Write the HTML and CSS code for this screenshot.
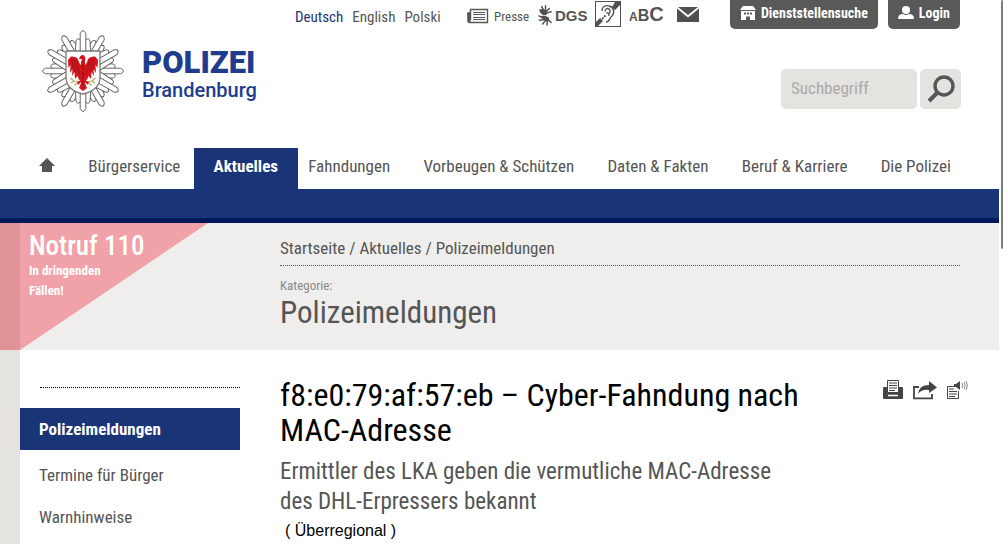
FILE: index.html
```
<!DOCTYPE html>
<html lang="de">
<head>
<meta charset="utf-8">
<title>Polizei Brandenburg</title>
<link rel="stylesheet" href="styles.css">
</head>
<body>
<div class="page">
  <header class="header">
    <div class="topbar">
      <nav class="languages" aria-label="Sprache">
        <a class="current" href="#">Deutsch</a>
        <a href="#">English</a>
        <a href="#">Polski</a>
      </nav>
      <nav class="services" aria-label="Service">
        <a class="presse" href="#">
          <svg width="22" height="16" viewBox="0 0 22 16"><path d="M3.500 1.500H20.500V14.500H2.500Q1 14.500 1 13V5H3.500ZM3.500 5V12" fill="none" stroke="#555" stroke-width="1.400"/><path d="M0 5H3.500V14H1Z" fill="#555"/><path d="M6 4.500H18M6 6.500H18M6 9.500H18M6 11.500H18" stroke="#555" stroke-width="1.200"/></svg>
          <span>Presse</span>
        </a>
        <a class="dgs" href="#">
          <svg width="15" height="24" viewBox="0 0 16 24"><g fill="none" stroke="#505050" stroke-width="1.600" stroke-linecap="round"><path d="M5 8L2 6.500M6 7L4 3M8 7L8 2M9 8L12 5M9 10L14 8.500"/><path d="M5 15L1 13M6 17L1.500 17.500M8 18L5 21.500M10 18L9.500 22.500M11 17L14 20"/></g><path d="M2 6Q7 5 10 8L9 12Q5 13 2 9ZM3 13Q8 12 12 15L11 19Q6 19 4 15Z" fill="#505050"/></svg>
          <b>DGS</b>
        </a>
        <a href="#" aria-label="Gehörlose">
          <svg width="26" height="26" viewBox="0 0 26 26"><rect x=".5" y=".5" width="25" height="25" fill="#fff" stroke="#505050"/><path d="M20 1H25V4L20 9L17 6ZM1 21L5 17L8 20L3 25H1Z" fill="#505050"/><path d="M7 10C7 5 11 4 14 5C19 6 20 12 17 15C14 17 15 21 11 21M10 10.500C10 7 13 7 14.500 8.500C16 10 15 12 13 13.500M11 12Q14 11 14 15" fill="none" stroke="#505050" stroke-width="1.300"/><path d="M7 18L11 14" stroke="#505050" stroke-width="2" stroke-dasharray="2 1"/></svg>
        </a>
        <a class="abc" href="#" aria-label="Schriftgröße"><b class="abc-a">A</b><b class="abc-b">B</b><b class="abc-c">C</b></a>
        <a class="mail" href="#" aria-label="Kontakt">
          <svg width="22" height="15" viewBox="0 0 22 15"><path d="M0 1.500L11 10.500L22 1.500V15H0Z" fill="#505050"/><path d="M1 0H21L11 8Z" fill="#505050"/></svg>
        </a>
      </nav>
      <div class="tabs">
        <a class="tab" href="#">
          <svg width="16" height="14" viewBox="0 0 16 14"><path d="M3 0H13L16 4H0Z" fill="#fff"/><path fill-rule="evenodd" d="M1 5H15V14H10V10.500H6V14H1ZM4 6.500V8.500H6V6.500ZM7 6.500V8.500H9V6.500ZM10 6.500V8.500H12V6.500Z" fill="#fff"/></svg>
          <span>Dienststellensuche</span>
        </a>
        <a class="tab" href="#">
          <svg width="16" height="14" viewBox="0 0 16 14"><circle cx="8" cy="4" r="4" fill="#fff"/><path d="M0 13Q0 8 5 8Q8 10 11 8Q16 8 16 13Z" fill="#fff"/></svg>
          <span>Login</span>
        </a>
      </div>
    </div>
    <div class="brandrow">
      <a class="brand" href="#">
        <svg class="star" width="84" height="84" viewBox="-42 -42 84 84">
          <defs>
            <g id="ray"><path d="M-8 -14L-7 -30Q-5.500 -34 -2.800 -31L2.800 -31Q5.500 -34 7 -30L8 -14" fill="#fff"/><path d="M-2.800 -16V-37.500Q0 -43.500 2.800 -37.500V-16Z" fill="#fff"/></g>
            <g id="wing"><path d="M1 -5Q4 -7 5 -12Q7 -15 12 -14.500L15 -11L14.500 -3L12.500 -6L13 2L10.500 -2L11 5L8.500 1L8 8L5.500 5L4 9L1 8Z" fill="#d3151c"/><path d="M6 -11L4 3M8.500 -12L7 1M11 -12L10 -1" stroke="#8f1015" stroke-width=".7" fill="none"/><path d="M2 9L6 11L5 14L2 11Z" fill="#d3151c"/><path d="M5 10.500L9 10L12.500 7M9 10L12 12M6 12L8.500 14.500" stroke="#b9a55a" stroke-width="1.200" fill="none"/></g>
          </defs>
          <g stroke="#555" stroke-width=".9">
            <use href="#ray" transform="rotate(30)"/><use href="#ray" transform="rotate(90)"/><use href="#ray" transform="rotate(150)"/><use href="#ray" transform="rotate(210)"/><use href="#ray" transform="rotate(270)"/><use href="#ray" transform="rotate(330)"/>
            <use href="#ray"/><use href="#ray" transform="rotate(60)"/><use href="#ray" transform="rotate(120)"/><use href="#ray" transform="rotate(180)"/><use href="#ray" transform="rotate(240)"/><use href="#ray" transform="rotate(300)"/>
          </g>
          <path d="M-17 -20H17V6Q17 19 0 23Q-17 19 -17 6Z" fill="#fff" stroke="#777" stroke-width="1.300"/>
          <use href="#wing"/><use href="#wing" transform="scale(-1 1)"/>
          <path d="M-4 -12Q-3 -16 0 -16Q3 -15 2 -10L3 8L2 12L4 17L0 20L-4 17L-2 12L-3 8L-2 -9L-1 -12Z" fill="#d3151c"/>
          <path d="M0 -7V17M-2 -4L2 -2M-2 2L2 4" stroke="#8f1015" stroke-width=".7" fill="none"/>
        </svg>
        <span class="brand-name"><b>POLIZEI</b><span>Brandenburg</span></span>
      </a>
      <form class="search">
        <input type="search" placeholder="Suchbegriff" aria-label="Suchbegriff">
        <button type="button" aria-label="Suchen">
          <svg width="28" height="28" viewBox="0 0 28 28"><circle cx="17" cy="11" r="9" fill="none" stroke="#555" stroke-width="3.400"/><path d="M10.500 17.500L2 26" stroke="#555" stroke-width="4"/></svg>
        </button>
      </form>
    </div>
    <nav class="mainnav" aria-label="Hauptnavigation">
      <a class="home" href="#" aria-label="Startseite"><svg width="16" height="14" viewBox="0 0 16 14"><path d="M8 0L16 8H13V14H3V8H0Z" fill="#555"/></svg></a>
      <a href="#">Bürgerservice</a>
      <a class="active" href="#">Aktuelles</a>
      <a href="#">Fahndungen</a>
      <a href="#">Vorbeugen &amp; Schützen</a>
      <a href="#">Daten &amp; Fakten</a>
      <a href="#">Beruf &amp; Karriere</a>
      <a href="#">Die Polizei</a>
    </nav>
  </header>
  <div class="bluebar"></div>
  <section class="hero">
    <div class="hero-edge"></div>
    <a class="emergency" href="#"><strong>Notruf 110</strong><span>In dringenden<br>Fällen!</span></a>
    <div class="hero-text">
      <nav class="crumbs" aria-label="Brotkrumen"><a href="#">Startseite</a> / <a href="#">Aktuelles</a> / <a href="#">Polizeimeldungen</a></nav>
      <p class="label">Kategorie:</p>
      <p class="category">Polizeimeldungen</p>
    </div>
  </section>
  <div class="body">
    <aside class="sidebar">
      <nav aria-label="Unternavigation">
        <a class="selected" href="#">Polizeimeldungen</a>
        <a href="#">Termine für Bürger</a>
        <a href="#">Warnhinweise</a>
      </nav>
    </aside>
    <main class="article">
      <div class="article-text">
        <h1>f8:e0:79:af:57:eb – Cyber-Fahndung nach MAC-Adresse</h1>
        <h2>Ermittler des LKA geben die vermutliche MAC-Adresse des DHL-Erpressers bekannt</h2>
        <p>( Überregional )</p>
      </div>
      <div class="tools">
        <button type="button" aria-label="Drucken"><svg width="20" height="20" viewBox="0 0 20 20"><path d="M0 8Q0 7 1 7H19Q20 7 20 8V18Q20 19 19 19H1Q0 19 0 18Z" fill="#444"/><path d="M4.500 .500H15.500V12.500H4.500Z" fill="#fff" stroke="#444"/><path d="M6 3H14M6 5.500H14M6 8H14M6 10.500H12" stroke="#444"/><path d="M5 15.500H15" stroke="#fff" stroke-width="1.500"/></svg></button>
        <button type="button" aria-label="Teilen"><svg width="24" height="20" viewBox="0 0 24 20"><path d="M6 7H1V18.300H19V14" fill="none" stroke="#444" stroke-width="1.800"/><path d="M16 1L24 7.500L16 13V10Q9 9 5 14Q6 5 16 5Z" fill="#444"/></svg></button>
        <button type="button" aria-label="Vorlesen"><svg width="21" height="20" viewBox="0 0 21 20"><path d="M7 6.500H.500V18.500H11.500V11" fill="none" stroke="#444"/><path d="M2 9H7M2 11.500H10M2 14H10M2 16.500H8" stroke="#444"/><path d="M7 4H9L13 1V10L9 7H7Z" fill="#444"/><path d="M15 3Q16.500 5 15 8M17 2Q19.500 5 17 9M19 1Q22 5 19 10" fill="none" stroke="#888"/></svg></button>
      </div>
    </main>
  </div>
  <div class="scroll-thumb"></div>
</div>
</body>
</html>
```
FILE: styles.css
```
* { box-sizing: border-box; }
body { margin: 0; background: #fff; color: #555; font-family: "Roboto Condensed", Roboto, sans-serif; font-size: 17px; }
a { color: inherit; text-decoration: none; }
h1, h2, p { margin: 0; font-weight: normal; }
button { border: 0; padding: 0; background: none; }
svg { display: block; flex: none; }
.page { position: relative; min-height: 100vh; display: flex; flex-direction: column; overflow: hidden; }
.header { padding: 0 43px 0 39px; }
.topbar { display: flex; height: 31px; align-items: flex-start; }
.languages { display: flex; gap: 9px; width: 172px; margin-left: 256px; padding-top: 8px; font-size: 15px; line-height: 18px; }
.languages .current { color: #1a3478; }
.services { display: flex; align-items: center; height: 28px; }
.presse { display: flex; align-items: center; gap: 5px; width: 71px; padding-top: 4px; font-size: 13px; }
.dgs { display: flex; align-items: center; gap: 2px; width: 57px; padding-top: 2px; font: 15px "Liberation Sans", sans-serif; }
.abc { display: flex; align-items: baseline; width: 48px; margin-left: 8px; font: 15px "Liberation Sans", sans-serif; }
.abc-a { font-size: 12px; }
.abc-b { font-size: 16px; }
.abc-c { font-size: 20px; }
.tabs { display: flex; gap: 10px; margin-left: auto; }
.tab { display: flex; align-items: center; gap: 5px; height: 29px; padding: 0 10px 4px; border-radius: 0 0 5px 5px; background: #595959; color: #fff; font-size: 14px; font-weight: bold; }
.brandrow { display: flex; justify-content: space-between; align-items: flex-start; height: 117px; }
.brand { display: flex; gap: 17px; margin-left: 2px; }
.star { margin-top: -2px; }
.brand-name { display: flex; flex-direction: column; padding-top: 14px; color: #1e3d8f; font-family: Roboto, sans-serif; }
.brand-name b { font-size: 31px; line-height: 36px; font-weight: 900; }
.brand-name span { font-size: 20px; line-height: 18px; font-weight: 500; }
.search { display: flex; gap: 3px; padding-top: 38px; margin-right: -1px; }
.search input { width: 136px; height: 40px; padding: 0 10px 2px; border: 0; border-radius: 5px; background: #e4e3df; font: 17px "Roboto Condensed", Roboto, sans-serif; }
.search input::placeholder { color: #aaa; opacity: 1; }
.search button { display: grid; place-items: center; width: 41px; height: 40px; border-radius: 5px; background: #e4e3df; }
.mainnav { display: flex; justify-content: space-between; height: 41px; line-height: 36px; white-space: nowrap; padding-right: 9px; }
.home { padding-top: 10px; }
.mainnav .active { padding: 0 20px; margin: 0 -23px 0 -20px; background: #1a3478; color: #fff; font-weight: bold; }
.bluebar { height: 34px; margin-right: 4px; border-bottom: 5px solid #00195c; background: #1a3478; }
.hero { display: flex; height: 127px; margin-right: 4px; background: #efeeec; }
.hero-edge { width: 20px; background: #e09296; }
.emergency { width: 260px; padding: 8px 9px; background: #f0a2a8; clip-path: polygon(0 0, 188px 0, 0 100%); color: #fff; }
.emergency strong { display: block; font-size: 27px; line-height: 30px; font-weight: 500; }
.emergency span { display: block; font-size: 13px; line-height: 20px; font-weight: bold; }
.hero-text { flex: 1; padding: 7px 39px 0 0; }
.crumbs { height: 36px; line-height: 36px; border-bottom: 1px dotted #555; }
.label { padding-top: 11px; font-size: 13px; line-height: 18px; color: #888; }
.category { font-size: 31px; line-height: 36px; }
.body { display: flex; flex: 1; border-left: 20px solid #e4e3df; }
.sidebar { width: 220px; padding-top: 37px; }
.sidebar nav::before { content: ""; display: block; margin: 0 0 20px 20px; border-top: 1px dotted #000; }
.sidebar a { display: block; padding-left: 19px; line-height: 42px; }
.sidebar .selected { margin-bottom: 4px; background: #1a3478; color: #fff; font-weight: bold; }
.article { flex: 1; display: flex; justify-content: space-between; padding: 28px 35px 0 40px; }
.article-text { width: 520px; }
h1 { color: #000; font-size: 32px; line-height: 35px; }
h2 { margin-top: 9px; font-size: 23px; line-height: 30px; }
.article p { padding: 5px; color: #000; font: 16px/18px "Liberation Sans", sans-serif; }
.tools { display: flex; gap: 10px; height: 20px; margin-top: 2px; }
.scroll-thumb { position: absolute; top: 0; right: 0; width: 2px; height: 249px; border-radius: 2px 0 0 2px; background: #7c7c7c; }
```
